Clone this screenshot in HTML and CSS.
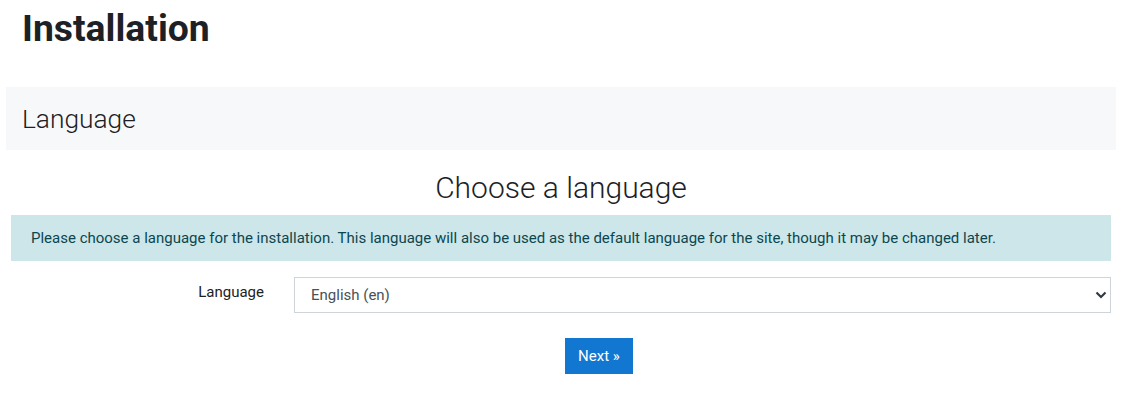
FILE: index.html
```html
<!DOCTYPE html>
<html lang="en">
<head>
<meta charset="utf-8">
<title>Installation</title>
<link rel="stylesheet" href="styles.css">
</head>
<body>
<div class="page">
  <h1 class="title">Installation</h1>
  <div class="panel"><h2 class="panel-title">Language</h2></div>
  <h3 class="choose">Choose a language</h3>
  <div class="alert">Please choose a language for the installation. This language will also be used as the default language for the site, though it may be changed later.</div>
  <form class="form">
    <div class="row">
      <label class="label" for="lang">Language</label>
      <div class="select-wrap">
        <select id="lang" class="select">
          <option>English (en)</option>
        </select>
        <svg class="chev" width="12" height="8" viewBox="0 0 12 8"><path d="M1.5 1.5 L6 6 L10.5 1.5" fill="none" stroke="#343a40" stroke-width="2.2"/></svg>
      </div>
    </div>
    <div class="buttons">
      <button type="button" class="btn">Next »</button>
    </div>
  </form>
</div>
</body>
</html>
```
FILE: styles.css
```css
* { box-sizing: border-box; }
html, body { margin: 0; padding: 0; background: #fff; }
body { font-family: Roboto, "Liberation Sans", sans-serif; color: #1d2125; }
.page { width: 1144px; padding-top: 6px; }
.title {
  margin: 0 0 0 22px;
  font-size: 37.3px;
  font-weight: 700;
  line-height: 44px;
  color: #1d2125;
}
.panel {
  margin: 37px 28px 0 6px;
  height: 63px;
  background: #f7f8f9;
  padding: 0 16px;
  display: flex;
  align-items: center;
}
.panel-title {
  margin: 0;
  font-size: 26.3px;
  font-weight: 300;
  line-height: 32px;
  color: #1d2125;
}
.choose {
  margin: 20px 0 0 0;
  width: 1122px;
  text-align: center;
  font-size: 30px;
  font-weight: 300;
  line-height: 36px;
  color: #1d2125;
}
.alert {
  margin: 9px 33px 0 11px;
  background: #cde6e9;
  color: #0b4650;
  font-size: 15px;
  line-height: 22px;
  padding: 12px 20px;
  height: 46px;
}
.form { margin-top: 16px; }
.row { display: flex; align-items: flex-start; }
.label {
  width: 264px;
  text-align: right;
  font-size: 15px;
  line-height: 22px;
  padding-top: 4px;
  color: #1d2125;
}
.select-wrap {
  position: relative;
  margin-left: 30px;
  width: 817px;
  height: 36px;
}
.select {
  -webkit-appearance: none;
  appearance: none;
  width: 100%;
  height: 36px;
  border: 1px solid #ced4da;
  border-radius: 0;
  background: #fff;
  font-family: Roboto, "Liberation Sans", sans-serif;
  font-size: 15px;
  color: #495057;
  padding: 0 16px;
}
.chev { position: absolute; right: 4px; top: 14px; pointer-events: none; }
.buttons { margin-top: 25px; padding-left: 565px; }
.btn {
  width: 68px;
  height: 36px;
  border: 0;
  background: #1177d1;
  color: #fff;
  font-family: Roboto, "Liberation Sans", sans-serif;
  font-size: 15px;
  padding: 0;
}
```
